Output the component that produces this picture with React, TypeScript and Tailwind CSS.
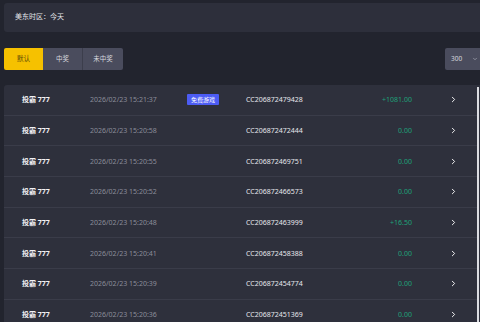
import { ChevronRight, ChevronDown } from "lucide-react";

const ROWS = [
  { time: "2026/02/23 15:21:37", free: true, no: "CC206872479428", amount: "+1081.00" },
  { time: "2026/02/23 15:20:58", free: false, no: "CC206872472444", amount: "0.00" },
  { time: "2026/02/23 15:20:55", free: false, no: "CC206872469751", amount: "0.00" },
  { time: "2026/02/23 15:20:52", free: false, no: "CC206872466573", amount: "0.00" },
  { time: "2026/02/23 15:20:48", free: false, no: "CC206872463999", amount: "+16.50" },
  { time: "2026/02/23 15:20:41", free: false, no: "CC206872458388", amount: "0.00" },
  { time: "2026/02/23 15:20:39", free: false, no: "CC206872454774", amount: "0.00" },
  { time: "2026/02/23 15:20:36", free: false, no: "CC206872451369", amount: "0.00" },
];

const FONT = { fontFamily: '"Noto Sans", "Noto Sans CJK SC", sans-serif' };

function Row({ time, free, no, amount }: (typeof ROWS)[number]) {
  return (
    <div className="flex items-center h-[30.66px] border-b border-[#3a3c49] pl-[18px] text-[7px] leading-none">
      <span className="w-[68px] font-bold text-[#f2f2f5]">投霸 777</span>
      <span className="w-[97px] text-[#8b8d9a]">{time}</span>
      <span className="w-[59px]">
        {free && (
          <span className="inline-flex items-center justify-center w-[32px] h-[11px] rounded-[1px] bg-[#4c5cf4] text-white text-[6px]">
            免费游戏
          </span>
        )}
      </span>
      <span className="w-[100px] text-[#e6e7ec]">{no}</span>
      <span className="w-[66px] text-right text-[#1ea27a]">{amount}</span>
      <ChevronRight className="ml-[37px] w-[9px] h-[9px] text-white" strokeWidth={2.5} />
    </div>
  );
}

export default function App() {
  return (
    <div className="h-[322px] overflow-hidden bg-[#22242e] pt-[3px]" style={FONT}>
      <div className="ml-[4px] h-[29px] rounded-l-[3px] bg-[#2d2f3b] flex items-center pl-[11px] text-[7px] text-[#e4e5ea]">
        美东时区：今天
      </div>

      <div className="mt-[16px] flex items-start justify-between">
        <div className="ml-[4px] flex h-[22px] rounded-[2px] overflow-hidden text-[6.5px]">
          <button className="w-[39px] bg-[#f6c100] text-[#5b4a07]">默认</button>
          <button className="w-[40px] bg-[#4a4c5d] text-[#d6d7de] border-r border-[#3c3e4c]">中奖</button>
          <button className="w-[40px] bg-[#4a4c5d] text-[#d6d7de]">未中奖</button>
        </div>
        <div className="w-[35px] h-[22px] rounded-l-[2px] bg-[#4a4c5d] flex items-center justify-between pl-[6px] pr-[2px] text-[6.5px] text-[#d6d7de]">
          <span>300</span>
          <ChevronDown className="w-[6px] h-[6px] text-[#b0b2bd]" strokeWidth={2.5} />
        </div>
      </div>

      <div className="mt-[15px] flex">
        <div className="ml-[4px] flex-1 rounded-tl-[3px] bg-[#2e303c]">
          {ROWS.map((r) => (
            <Row key={r.no} {...r} />
          ))}
        </div>
        <div className="w-[3px] pt-[2px] bg-[#2e303c]">
          <div className="ml-[0px] w-[2px] h-[240px] bg-[#dcdde2]" />
        </div>
      </div>
    </div>
  );
}
